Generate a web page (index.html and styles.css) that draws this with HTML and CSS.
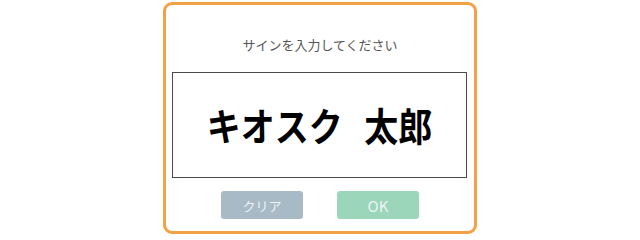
FILE: index.html
```html
<!DOCTYPE html>
<html lang="ja">
<head>
<meta charset="utf-8">
<link rel="stylesheet" href="styles.css">
</head>
<body>
<div class="card">
  <div class="title">サインを入力してください</div>
  <div class="sign-box">
    <div class="sign-name">キオスク 太郎</div>
  </div>
  <div class="actions">
    <button class="btn btn-clear">クリア</button>
    <button class="btn btn-ok">OK</button>
  </div>
</div>
</body>
</html>
```
FILE: styles.css
```css
html, body {
  margin: 0;
  padding: 0;
  background: #ffffff;
}
body {
  width: 640px;
  height: 237px;
  font-family: "Noto Sans CJK JP", "Noto Sans", sans-serif;
}
.card {
  box-sizing: border-box;
  width: 314px;
  height: 232px;
  margin: 2px auto 0;
  border: 3px solid #f2a145;
  border-radius: 9px;
  padding-top: 30px;
  display: flex;
  flex-direction: column;
  align-items: center;
}
.title {
  font-size: 13px;
  line-height: 20px;
  height: 20px;
  color: #555555;
}
.sign-box {
  box-sizing: border-box;
  width: 295px;
  height: 106px;
  margin-top: 17px;
  margin-right: 1px;
  border: 1px solid #4a4a4a;
  display: flex;
  align-items: center;
  justify-content: center;
}
.sign-name {
  font-size: 34px;
  font-weight: 700;
  color: #000000;
  line-height: 40px;
  word-spacing: 14px;
  transform: scaleY(1.12);
}
.actions {
  display: flex;
  gap: 34px;
  margin-top: 13px;
}
.btn {
  width: 82px;
  height: 28px;
  border: none;
  border-radius: 3px;
  padding: 0;
  font-family: "Noto Sans CJK JP", "Noto Sans", sans-serif;
  font-size: 13px;
  color: #eef3f4;
}
.btn-clear {
  background: #a8bac5;
}
.btn-ok {
  background: #9bd5ba;
  font-size: 15px;
}
```
